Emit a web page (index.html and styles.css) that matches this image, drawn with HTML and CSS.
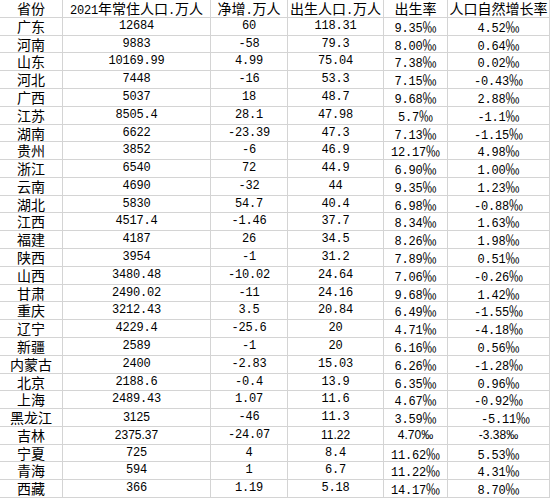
FILE: index.html
```html
<!DOCTYPE html>
<html lang="zh">
<head>
<meta charset="utf-8">
<link rel="stylesheet" href="styles.css">
</head>
<body>
<div class="sheet">
  <div class="c h">省份</div><div class="c h"><span class="d">2021</span>年常住人口<span class="d">.</span>万人</div><div class="c h">净增<span class="d">.</span>万人</div><div class="c h">出生人口<span class="d">.</span>万人</div><div class="c h">出生率</div><div class="c h">人口自然增长率</div>
  <div class="c p">广东</div><div class="c n">12684</div><div class="c n">60</div><div class="c n">118.31</div><div class="c n">9.35<span class="pm">‰</span></div><div class="c n">4.52<span class="pm">‰</span></div>
  <div class="c p">河南</div><div class="c n">9883</div><div class="c n">-58</div><div class="c n">79.3</div><div class="c n">8.00<span class="pm">‰</span></div><div class="c n">0.64<span class="pm">‰</span></div>
  <div class="c p">山东</div><div class="c n">10169.99</div><div class="c n">4.99</div><div class="c n">75.04</div><div class="c n">7.38<span class="pm">‰</span></div><div class="c n">0.02<span class="pm">‰</span></div>
  <div class="c p">河北</div><div class="c n">7448</div><div class="c n">-16</div><div class="c n">53.3</div><div class="c n">7.15<span class="pm">‰</span></div><div class="c n">-0.43<span class="pm">‰</span></div>
  <div class="c p">广西</div><div class="c n">5037</div><div class="c n">18</div><div class="c n">48.7</div><div class="c n">9.68<span class="pm">‰</span></div><div class="c n">2.88<span class="pm">‰</span></div>
  <div class="c p">江苏</div><div class="c n">8505.4</div><div class="c n">28.1</div><div class="c n">47.98</div><div class="c n">5.7<span class="pm">‰</span></div><div class="c n">-1.1<span class="pm">‰</span></div>
  <div class="c p">湖南</div><div class="c n">6622</div><div class="c n">-23.39</div><div class="c n">47.3</div><div class="c n">7.13<span class="pm">‰</span></div><div class="c n">-1.15<span class="pm">‰</span></div>
  <div class="c p">贵州</div><div class="c n">3852</div><div class="c n">-6</div><div class="c n">46.9</div><div class="c n">12.17<span class="pm">‰</span></div><div class="c n">4.98<span class="pm">‰</span></div>
  <div class="c p">浙江</div><div class="c n">6540</div><div class="c n">72</div><div class="c n">44.9</div><div class="c n">6.90<span class="pm">‰</span></div><div class="c n">1.00<span class="pm">‰</span></div>
  <div class="c p">云南</div><div class="c n">4690</div><div class="c n">-32</div><div class="c n">44</div><div class="c n">9.35<span class="pm">‰</span></div><div class="c n">1.23<span class="pm">‰</span></div>
  <div class="c p">湖北</div><div class="c n">5830</div><div class="c n">54.7</div><div class="c n">40.4</div><div class="c n">6.98<span class="pm">‰</span></div><div class="c n">-0.88<span class="pm">‰</span></div>
  <div class="c p">江西</div><div class="c n">4517.4</div><div class="c n">-1.46</div><div class="c n">37.7</div><div class="c n">8.34<span class="pm">‰</span></div><div class="c n">1.63<span class="pm">‰</span></div>
  <div class="c p">福建</div><div class="c n">4187</div><div class="c n">26</div><div class="c n">34.5</div><div class="c n">8.26<span class="pm">‰</span></div><div class="c n">1.98<span class="pm">‰</span></div>
  <div class="c p">陕西</div><div class="c n">3954</div><div class="c n">-1</div><div class="c n">31.2</div><div class="c n">7.89<span class="pm">‰</span></div><div class="c n">0.51<span class="pm">‰</span></div>
  <div class="c p">山西</div><div class="c n">3480.48</div><div class="c n">-10.02</div><div class="c n">24.64</div><div class="c n">7.06<span class="pm">‰</span></div><div class="c n">-0.26<span class="pm">‰</span></div>
  <div class="c p">甘肃</div><div class="c n">2490.02</div><div class="c n">-11</div><div class="c n">24.16</div><div class="c n">9.68<span class="pm">‰</span></div><div class="c n">1.42<span class="pm">‰</span></div>
  <div class="c p">重庆</div><div class="c n">3212.43</div><div class="c n">3.5</div><div class="c n">20.84</div><div class="c n">6.49<span class="pm">‰</span></div><div class="c n">-1.55<span class="pm">‰</span></div>
  <div class="c p">辽宁</div><div class="c n">4229.4</div><div class="c n">-25.6</div><div class="c n">20</div><div class="c n">4.71<span class="pm">‰</span></div><div class="c n">-4.18<span class="pm">‰</span></div>
  <div class="c p">新疆</div><div class="c n">2589</div><div class="c n">-1</div><div class="c n">20</div><div class="c n">6.16<span class="pm">‰</span></div><div class="c n">0.56<span class="pm">‰</span></div>
  <div class="c p">内蒙古</div><div class="c n">2400</div><div class="c n">-2.83</div><div class="c n">15.03</div><div class="c n">6.26<span class="pm">‰</span></div><div class="c n">-1.28<span class="pm">‰</span></div>
  <div class="c p">北京</div><div class="c n">2188.6</div><div class="c n">-0.4</div><div class="c n">13.9</div><div class="c n">6.35<span class="pm">‰</span></div><div class="c n">0.96<span class="pm">‰</span></div>
  <div class="c p">上海</div><div class="c n">2489.43</div><div class="c n">1.07</div><div class="c n">11.6</div><div class="c n">4.67<span class="pm">‰</span></div><div class="c n">-0.92<span class="pm">‰</span></div>
  <div class="c p">黑龙江</div><div class="c a">3125</div><div class="c n">-46</div><div class="c n">11.3</div><div class="c n">3.59<span class="pm">‰</span></div><div class="c n sh">-5.11<span class="pm">‰</span></div>
  <div class="c p">吉林</div><div class="c a">2375.37</div><div class="c n">-24.07</div><div class="c a">11.22</div><div class="c a">4.70‰</div><div class="c a">-3.38‰</div>
  <div class="c p">宁夏</div><div class="c n">725</div><div class="c n">4</div><div class="c n">8.4</div><div class="c n">11.62<span class="pm">‰</span></div><div class="c n">5.53<span class="pm">‰</span></div>
  <div class="c p">青海</div><div class="c n">594</div><div class="c n">1</div><div class="c n">6.7</div><div class="c n">11.22<span class="pm">‰</span></div><div class="c n">4.31<span class="pm">‰</span></div>
  <div class="c p">西藏</div><div class="c n">366</div><div class="c n">1.19</div><div class="c n">5.18</div><div class="c n">14.17<span class="pm">‰</span></div><div class="c n">8.70<span class="pm">‰</span></div>
</div>
</body>
</html>
```

FILE: styles.css
```css
html, body {
  margin: 0;
  padding: 0;
  background: #ffffff;
}

.sheet {
  display: grid;
  grid-template-columns: 63px 148px 77px 96px 64px 102px;
  grid-template-rows: repeat(28, minmax(0, 1fr));
  width: 550px;
  height: 498px;
  font-family: "Noto Sans CJK SC", sans-serif;
  color: #000000;
}

.c {
  display: block;
  text-align: center;
  border-right: 1px solid #d4d4d4;
  border-bottom: 1px solid #d4d4d4;
  white-space: nowrap;
  line-height: 17px;
}

.h,
.p {
  font-size: 14px;
  font-family: "Noto Sans CJK SC", sans-serif;
}

.d {
  font-family: "Liberation Mono", monospace;
  font-size: 12px;
  letter-spacing: -0.2px;
}

.n {
  font-family: "Liberation Mono", "Noto Sans CJK SC", monospace;
  font-size: 12px;
  letter-spacing: -0.2px;
}

.pm {
  font-family: "Noto Sans CJK JP", "Noto Sans CJK SC", sans-serif;
  font-size: 14px;
  letter-spacing: 0;
}

.a {
  font-family: "Liberation Sans", "Noto Sans CJK SC", sans-serif;
  font-size: 12px;
}

.sh {
  padding-left: 14px;
}
```
